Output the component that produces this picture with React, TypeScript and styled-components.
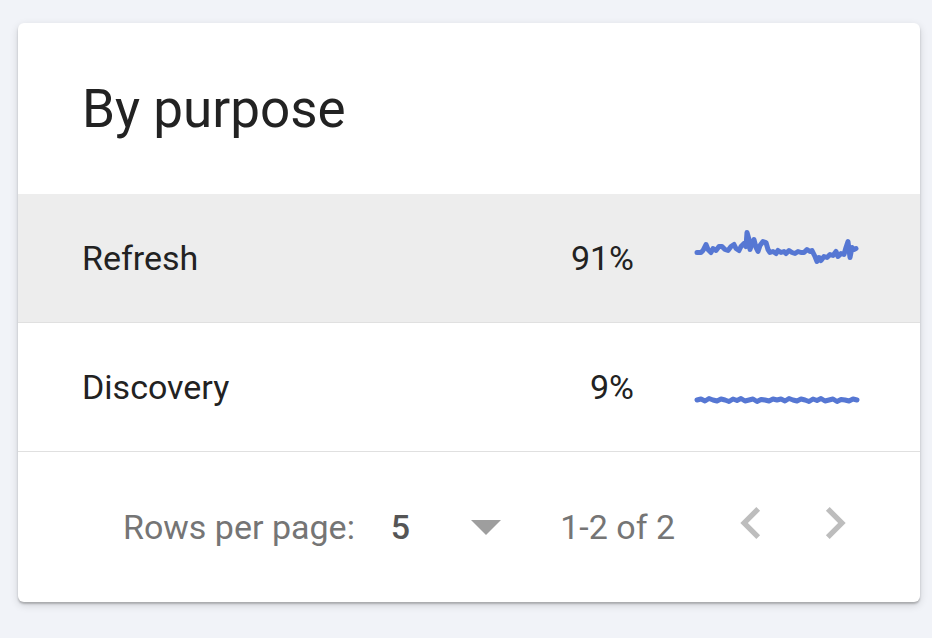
import React from 'react'
import styled, { createGlobalStyle } from 'styled-components'

const GlobalStyle = createGlobalStyle`
  html, body {
    margin: 0;
    padding: 0;
    background: #f1f3f8;
    font-family: Roboto, 'Liberation Sans', sans-serif;
  }
`

type Row = {
  label: string
  share: string
  // sparkline points as [x, y] inside a 160x50 box
  points: [number, number][]
}

const refreshAbs: [number, number][] = [
  [698, 253], [702, 253], [704, 251], [707, 245], [709, 250], [712, 253], [714, 249], [717, 251],
  [720, 247], [723, 247], [726, 250], [729, 251], [732, 247], [735, 245], [737, 249], [740, 251],
  [742, 247], [745, 244], [747, 247], [748, 233], [750, 240], [751, 250], [753, 244], [755, 240],
  [757, 248], [759, 252], [761, 246], [764, 242], [767, 243], [769, 250], [771, 253], [774, 252],
  [777, 254], [779, 251], [782, 253], [785, 252], [787, 254], [790, 251], [793, 253], [796, 254],
  [799, 252], [802, 253], [805, 253], [808, 250], [811, 252], [813, 251], [816, 257], [818, 262],
  [820, 258], [822, 261], [825, 257], [828, 258], [831, 255], [834, 256], [837, 252], [839, 257],
  [842, 254], [845, 255], [847, 248], [849, 242], [851, 258], [853, 248], [855, 250], [857, 249]
]

const wiggle = [0, -1, 1, -1.5, 0, 1, -1, 0, 1.5, -1, 0.5, -1.5, 1, 0, -1, 1.5, -0.5, 0, 1, -1]
const discoveryPoints: [number, number][] = Array.from({ length: 41 }, (_, i) => [
  i * 4,
  38 + wiggle[i % wiggle.length]
])

const rows: Row[] = [
  {
    label: 'Refresh',
    share: '91%',
    points: refreshAbs.map(([x, y]) => [x - 698, y - 233.5])
  },
  { label: 'Discovery', share: '9%', points: discoveryPoints }
]

const Page = styled.div`
  padding: 23px 12px 36px 18px;
`

const Card = styled.div`
  width: 902px;
  background: #fff;
  border-radius: 6px;
  box-shadow: 0 2px 2px rgba(0, 0, 0, 0.22), 0 3px 8px rgba(0, 0, 0, 0.14);
  overflow: hidden;
`

const Header = styled.div`
  height: 171px;
  display: flex;
  align-items: center;
  padding-left: 64px;
`

const Title = styled.h2`
  margin: 0;
  font-size: 53px;
  font-weight: 400;
  color: #222;
`

const TableRow = styled.div<{ $active?: boolean }>`
  box-sizing: border-box;
  height: 129px;
  display: grid;
  grid-template-columns: 1fr auto 160px;
  column-gap: 63px;
  align-items: center;
  padding: 0 63px 0 64px;
  background: ${(p) => (p.$active ? '#ededed' : '#fff')};
  border-bottom: 1px solid #e0e0e0;
  font-size: 34px;
  color: #222;
`

const Cell = styled.span<{ $align?: 'left' | 'right' }>`
  text-align: ${(p) => p.$align ?? 'left'};
`

const SparkBox = styled.svg`
  display: block;
  width: 160px;
  height: 50px;
  overflow: visible;
`

const Footer = styled.div`
  height: 150px;
  display: flex;
  align-items: center;
  justify-content: flex-end;
  padding-right: 53px;
  font-size: 34px;
  color: #757575;
`

const Caption = styled.span`
  margin-right: 36px;
`

const SelectValue = styled.span`
  color: #555;
  font-weight: 500;
  margin-right: 61px;
`

const DropArrow = styled.svg`
  width: 30px;
  height: 15px;
  margin-right: 59px;
`

const RangeText = styled.span`
  margin-right: 44px;
`

const IconButton = styled.button`
  width: 64px;
  height: 64px;
  padding: 0;
  border: 0;
  background: none;
  margin-bottom: 9px;
  & + & {
    margin-left: 20px;
  }
  svg {
    display: block;
    width: 64px;
    height: 64px;
    fill: #bdbdbd;
  }
`

const Sparkline = ({ points }: { points: [number, number][] }) => (
  <SparkBox viewBox="0 0 160 50">
    <polyline
      points={points.map(([x, y]) => `${x},${y}`).join(' ')}
      fill="none"
      stroke="#5677d3"
      strokeWidth={5}
      strokeLinejoin="round"
      strokeLinecap="round"
    />
  </SparkBox>
)

export default function App() {
  return (
    <>
      <GlobalStyle />
      <Page>
        <Card>
          <Header>
            <Title>By purpose</Title>
          </Header>
          {rows.map((row, i) => (
            <TableRow key={row.label} $active={i === 0}>
              <Cell>{row.label}</Cell>
              <Cell $align="right">{row.share}</Cell>
              <Sparkline points={row.points} />
            </TableRow>
          ))}
          <Footer>
            <Caption>Rows per page:</Caption>
            <SelectValue>5</SelectValue>
            <DropArrow viewBox="0 0 30 15">
              <polygon points="0,0 30,0 15,15" fill="#9e9e9e" />
            </DropArrow>
            <RangeText>1-2 of 2</RangeText>
            <IconButton aria-label="Previous page">
              <svg viewBox="0 0 24 24">
                <path d="M15.41 7.41L14 6l-6 6 6 6 1.41-1.41L10.83 12z" />
              </svg>
            </IconButton>
            <IconButton aria-label="Next page">
              <svg viewBox="0 0 24 24">
                <path d="M10 6L8.59 7.41 13.17 12l-4.58 4.59L10 18l6-6z" />
              </svg>
            </IconButton>
          </Footer>
        </Card>
      </Page>
    </>
  )
}
